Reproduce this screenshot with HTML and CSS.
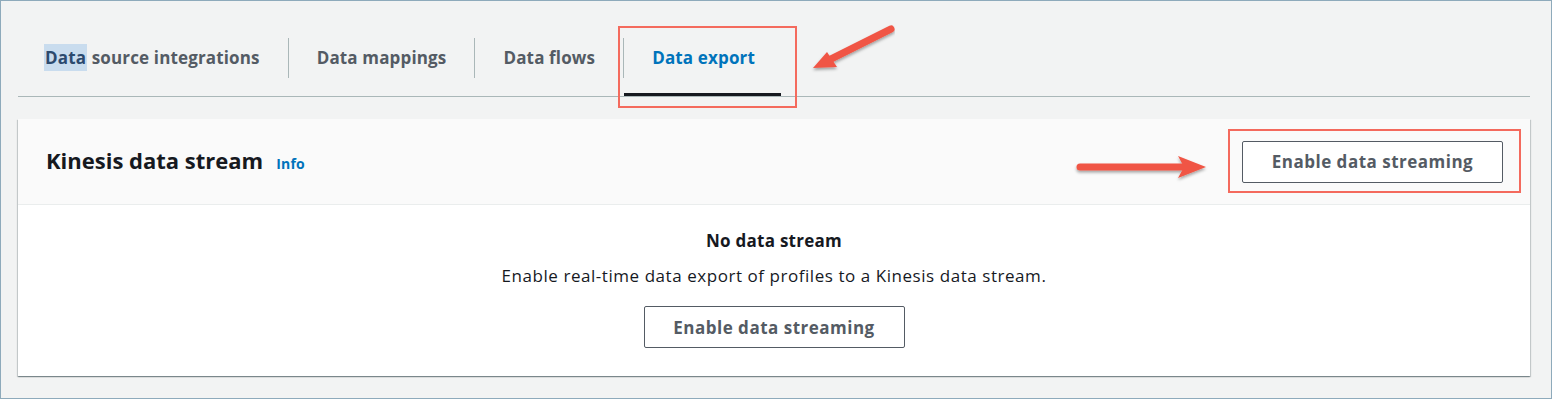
FILE: index.html
```html
<!DOCTYPE html>
<html>
<head>
<meta charset="utf-8">
<link rel="stylesheet" href="styles.css">
</head>
<body>
<div class="frame">
  <div class="tabs">
    <div class="tab"><span class="label"><span class="sel">Data</span> source integrations</span></div>
    <div class="tab"><span class="label divided">Data mappings</span></div>
    <div class="tab"><span class="label divided">Data flows</span></div>
    <div class="tab active"><span class="label divided">Data export</span></div>
  </div>
  <div class="panel">
    <div class="panel-header">
      <div class="title"><h2>Kinesis data stream</h2><a class="info">Info</a></div>
      <button class="btn">Enable data streaming</button>
    </div>
    <div class="panel-body">
      <div class="empty-title">No data stream</div>
      <div class="empty-desc">Enable real-time data export of profiles to a Kinesis data stream.</div>
      <button class="btn">Enable data streaming</button>
    </div>
  </div>

  <div class="mark mark-tab"></div>
  <div class="mark mark-btn"></div>
  <svg class="arrow arrow-tab" width="100" height="60" viewBox="0 0 100 60">
    <defs>
      <filter id="sh1" x="-20%" y="-20%" width="140%" height="160%"><feDropShadow dx="0" dy="2" stdDeviation="1.5" flood-color="#000" flood-opacity="0.35"/></filter>
    </defs>
    <g filter="url(#sh1)">
      <line x1="96" y1="8" x2="30" y2="41" stroke="#f05545" stroke-width="7" stroke-linecap="round"/>
      <polygon points="18,47 32,31 42,46" fill="#f05545"/>
    </g>
  </svg>
  <svg class="arrow arrow-btn" width="150" height="30" viewBox="0 0 150 30">
    <defs>
      <filter id="sh2" x="-10%" y="-40%" width="120%" height="200%"><feDropShadow dx="0" dy="2" stdDeviation="1.5" flood-color="#000" flood-opacity="0.35"/></filter>
    </defs>
    <g filter="url(#sh2)">
      <line x1="18" y1="14" x2="120" y2="14" stroke="#f05545" stroke-width="7" stroke-linecap="round"/>
      <polygon points="116,3 144,14 116,25 122,14" fill="#f05545"/>
    </g>
  </svg>
</div>
</body>
</html>
```

FILE: styles.css
```css
* { box-sizing: border-box; }
html, body { margin: 0; padding: 0; }
body {
  font-family: "Open Sans", "Liberation Sans", Arial, sans-serif;
  color: #16191f;
}
.frame {
  position: relative;
  width: 1552px;
  height: 399px;
  background: #f2f3f3;
  border: 1px solid #8eaabb;
  padding: 0 21px 0 17px;
}
.tabs {
  display: flex;
  margin-top: 17px;
  height: 79px;
  border-bottom: 1px solid #aab7b8;
}
.tab {
  position: relative;
  padding-top: 20px;
  height: 78px;
}
.label {
  display: block;
  height: 40px;
  line-height: 40px;
  padding: 0 28px;
  font-size: 17px;
  letter-spacing: 0.15px;
  font-weight: bold;
  color: #545b64;
}
.label.divided { border-left: 1px solid #aab7b8; }
.sel {
  background: #c9dcee;
  color: #2c4a6e;
  padding: 2px 1px;
  margin-left: -2px;
}
.tab.active .label { color: #0073bb; }
.tab.active::after {
  content: "";
  position: absolute;
  left: 1px;
  right: 2px;
  bottom: 0;
  height: 3px;
  background: #16191f;
}
.panel {
  margin-top: 22px;
  background: #fff;
  box-shadow: 0 1px 1px 0 rgba(0,28,36,.3), 1px 1px 1px 0 rgba(0,28,36,.15), -1px 1px 1px 0 rgba(0,28,36,.15);
}
.panel-header {
  height: 86px;
  background: #fafafa;
  border-bottom: 1px solid #eaeded;
  display: flex;
  align-items: center;
  justify-content: space-between;
  padding: 0 27px 0 28px;
}
.title { display: flex; align-items: baseline; gap: 13px; margin-top: -3px; }
h2 {
  margin: 0;
  font-size: 22px;
  font-weight: bold;
  color: #16191f;
}
.info {
  font-size: 14px;
  letter-spacing: 0.2px;
  font-weight: bold;
  color: #0073bb;
}
.btn {
  font-family: inherit;
  background: #fff;
  border: 1px solid #545b64;
  border-radius: 2px;
  color: #545b64;
  font-size: 17px;
  letter-spacing: 0.5px;
  font-weight: bold;
  height: 42px;
  padding: 0;
  width: 261px;
}
.panel-body {
  display: flex;
  flex-direction: column;
  align-items: center;
  padding: 25px 0 28px;
}
.empty-title {
  font-size: 17px;
  letter-spacing: 0.25px;
  font-weight: bold;
  line-height: 22px;
  color: #16191f;
}
.empty-desc {
  margin-top: 13px;
  font-size: 17px;
  letter-spacing: 0.55px;
  line-height: 22px;
  color: #16191f;
}
.panel-body .btn { margin-top: 19px; }
.mark {
  position: absolute;
  border: 2px solid #f46a5d;
}
.mark-tab { left: 617px; top: 25px; width: 179px; height: 82px; }
.mark-btn { left: 1227px; top: 128px; width: 293px; height: 64px; }
.arrow { position: absolute; }
.arrow-tab { left: 794px; top: 20px; }
.arrow-btn { left: 1061px; top: 152px; }
```
